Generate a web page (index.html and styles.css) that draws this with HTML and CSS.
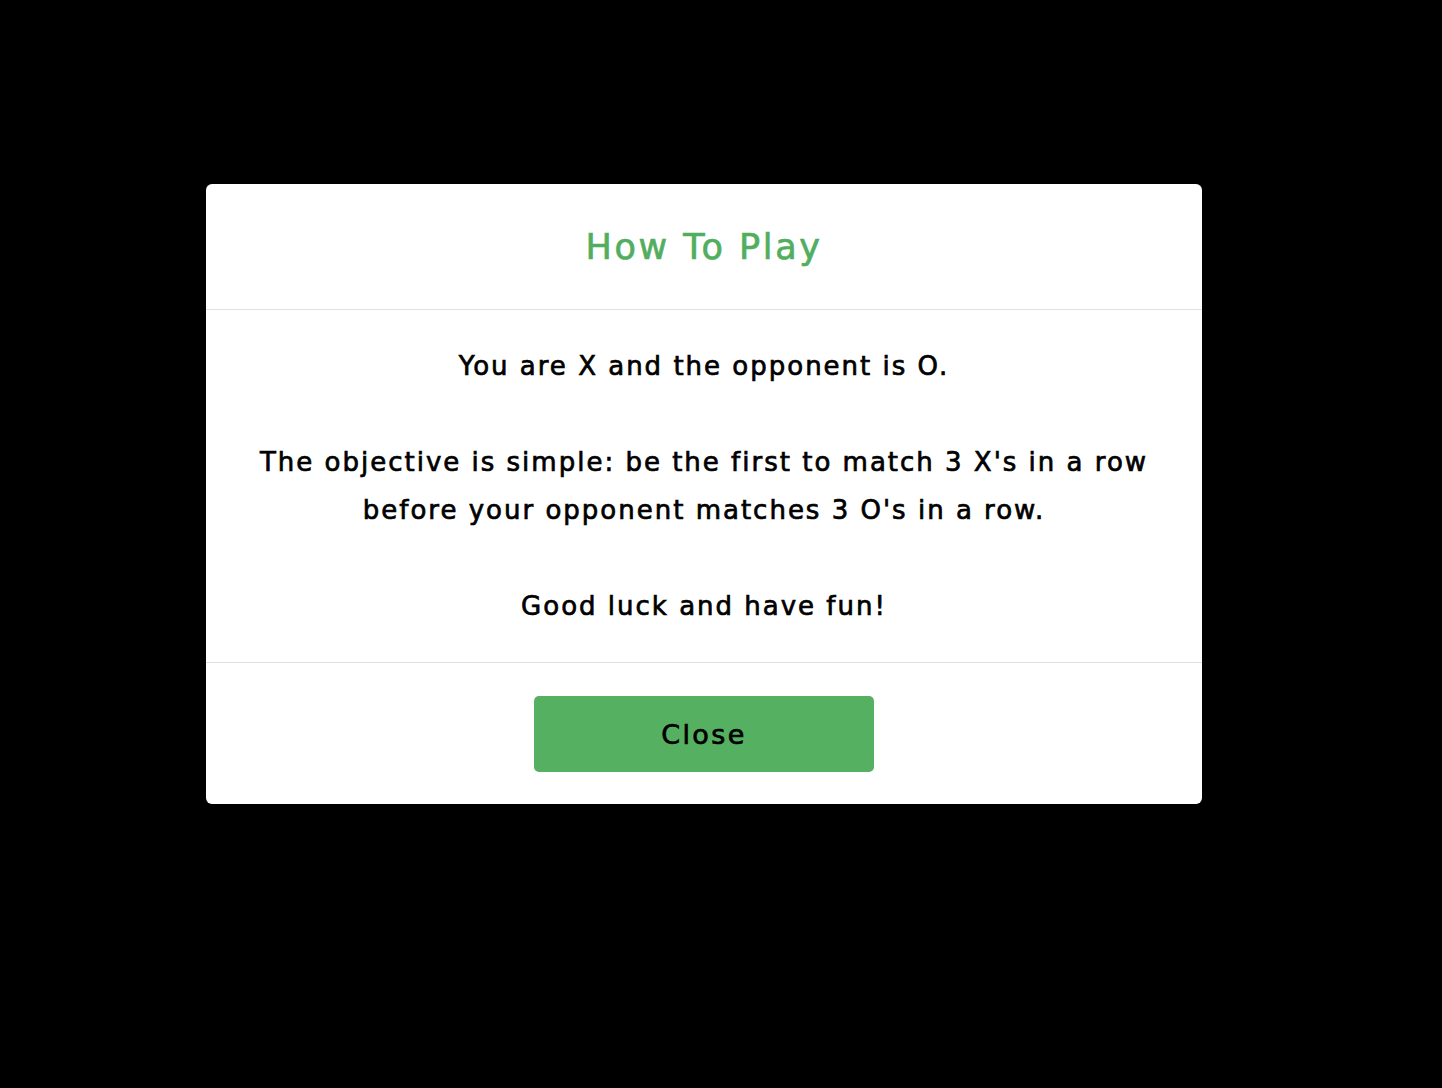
FILE: index.html
```html
<!DOCTYPE html>
<html>
<head>
<meta charset="utf-8">
<title>How To Play</title>
<link rel="stylesheet" href="styles.css">
</head>
<body>
<div class="backdrop">
  <div class="modal">
    <div class="modal-header">
      <h2 class="modal-title">How To Play</h2>
    </div>
    <div class="modal-body">
      <p>You are X and the opponent is O.<br><br>The objective is simple: be the first to match 3 X's in a row<br>before your opponent matches 3 O's in a row.<br><br>Good luck and have fun!</p>
    </div>
    <div class="modal-footer">
      <button class="btn-close">Close</button>
    </div>
  </div>
</div>
</body>
</html>
```

FILE: styles.css
```css
html, body {
  margin: 0;
  padding: 0;
  background: #000;
}
body {
  font-family: "DejaVu Sans", "Noto Sans", sans-serif;
  color: #000;
}
.backdrop {
  padding-top: 184px;
  padding-left: 206px;
  min-height: 904px;
}
.modal {
  width: 996px;
  background: #fff;
  border-radius: 6px;
  overflow: hidden;
}
.modal-header {
  height: 125px;
  border-bottom: 1px solid #dee2e6;
  display: flex;
  align-items: center;
  justify-content: center;
}
.modal-title {
  margin: 0;
  font-size: 35px;
  font-weight: normal;
  letter-spacing: 2.6px;
  color: #52ae5f;
  -webkit-text-stroke: 0.7px #52ae5f;
}
.modal-body {
  padding: 32px 16px 32px;
  text-align: center;
}
.modal-body p {
  margin: 0;
  font-size: 26px;
  line-height: 48px;
  letter-spacing: 2px;
  -webkit-text-stroke: 0.7px #000;
}
.modal-footer {
  border-top: 1px solid #dee2e6;
  padding: 33px 0 32px;
  display: flex;
  justify-content: center;
}
.btn-close {
  width: 340px;
  height: 76px;
  background: #56b061;
  border: none;
  border-radius: 5px;
  font-family: inherit;
  font-size: 27px;
  letter-spacing: 2.4px;
  color: #000;
  -webkit-text-stroke: 0.7px #000;
}
```
